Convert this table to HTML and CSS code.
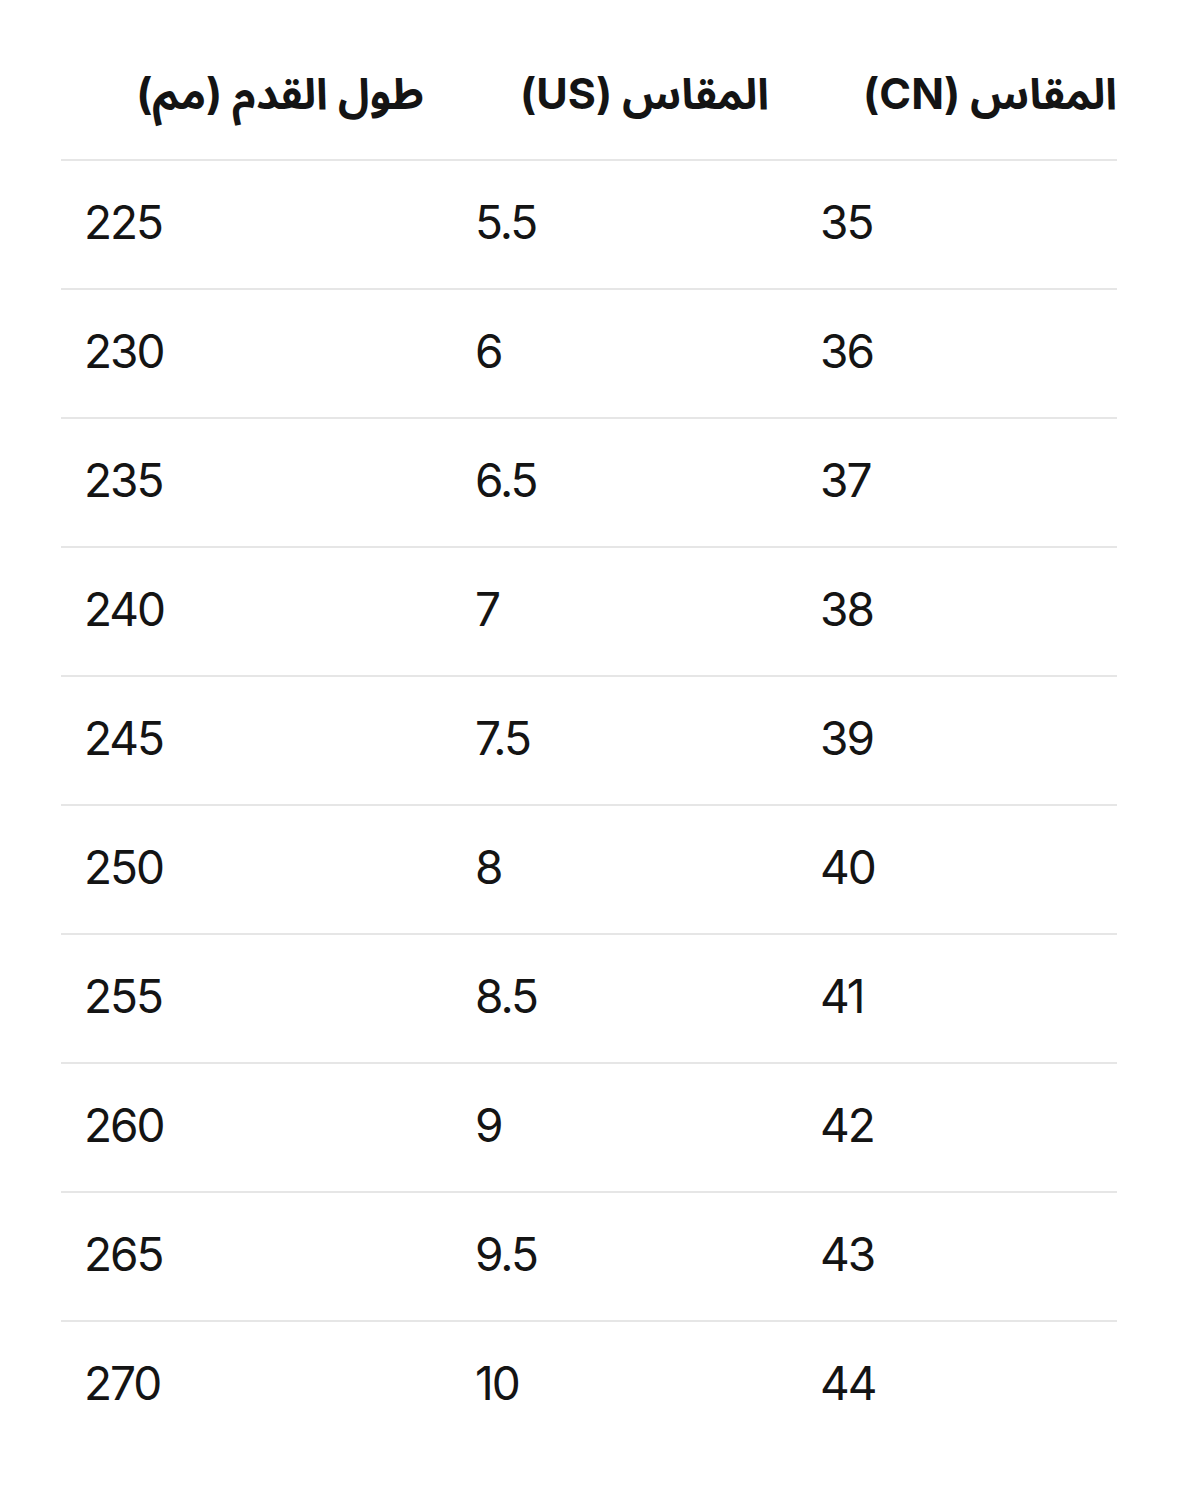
FILE: index.html
```html
<!DOCTYPE html>
<html lang="ar" dir="rtl">
<head>
<meta charset="utf-8">
<link rel="stylesheet" href="styles.css">
</head>
<body>
<div class="table">
  <div class="row head">
    <div class="cell c1">المقاس (CN)</div>
    <div class="cell c2">المقاس (US)</div>
    <div class="cell c3">طول القدم (مم)</div>
  </div>
  <div class="row"><div class="cell num">35</div><div class="cell num">5.5</div><div class="cell num">225</div></div>
  <div class="row"><div class="cell num">36</div><div class="cell num">6</div><div class="cell num">230</div></div>
  <div class="row"><div class="cell num">37</div><div class="cell num">6.5</div><div class="cell num">235</div></div>
  <div class="row"><div class="cell num">38</div><div class="cell num">7</div><div class="cell num">240</div></div>
  <div class="row"><div class="cell num">39</div><div class="cell num">7.5</div><div class="cell num">245</div></div>
  <div class="row"><div class="cell num">40</div><div class="cell num">8</div><div class="cell num">250</div></div>
  <div class="row"><div class="cell num">41</div><div class="cell num">8.5</div><div class="cell num">255</div></div>
  <div class="row"><div class="cell num">42</div><div class="cell num">9</div><div class="cell num">260</div></div>
  <div class="row"><div class="cell num">43</div><div class="cell num">9.5</div><div class="cell num">265</div></div>
  <div class="row last"><div class="cell num">44</div><div class="cell num">10</div><div class="cell num">270</div></div>
</div>
</body>
</html>
```
FILE: styles.css
```css
html, body {
  margin: 0;
  padding: 0;
  background: #ffffff;
}
body {
  padding: 32px 62px 60px 61px;
  color: #141414;
  font-family: Inter, Roboto, "Noto Sans", sans-serif;
}
.table {
  display: flex;
  flex-direction: column;
}
.row {
  display: grid;
  grid-template-columns: 320px 345px 1fr;
  height: 127px;
  border-bottom: 2px solid #e6e6e6;
  align-items: center;
}
.row.last {
  border-bottom: none;
}
.cell {
  font-size: 46px;
}
.head .cell {
  font-family: Inter, "Noto Sans Arabic", "DejaVu Sans", sans-serif;
  font-weight: 700;
  font-size: 43px;
  text-align: right;
  padding-right: 28px;
}
.head .cell.c1 {
  padding-right: 0;
}
.cell.num {
  direction: ltr;
  text-align: left;
  padding-left: 23px;
  padding-bottom: 5px;
  letter-spacing: -2px;
}
```
